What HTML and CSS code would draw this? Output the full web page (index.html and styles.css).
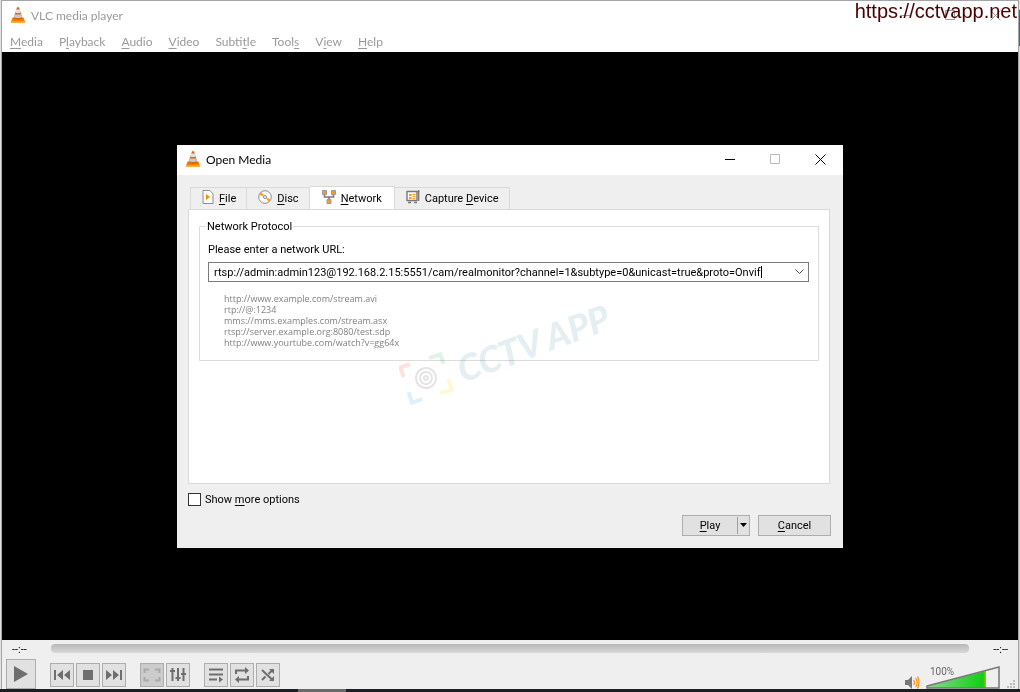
FILE: index.html
```html
<!DOCTYPE html>
<html lang="en">
<head>
  <meta charset="UTF-8" />
  <meta name="viewport" content="width=device-width, initial-scale=1.0" />
  <title>VLC media player</title>
  <link rel="stylesheet" href="styles.css">
</head>
<body>
  <svg class="defs" width="0" height="0" aria-hidden="true">
    <symbol id="cone" viewBox="0 0 16 18">
      <path d="M2.5 11.500h11l1.600 5H.9z" fill="#f57c00"/>
      <path d="M.9 15h14.200v1.600H.9z" fill="#ffa51f"/>
      <path d="M7 1.200h2l3.500 11.300c-1.400 1.600-7.600 1.600-9 0z" fill="#e0660a"/>
      <path d="M6.200 3.600h3.600l.9 2.900c-1 .8-4.400.8-5.400 0z" fill="#dfe2e4"/>
      <path d="M4.800 8.500h6.400l.9 2.800c-1.600 1-6.600 1-8.200 0z" fill="#c4c9cc"/>
    </symbol>
  </svg>

  <div class="window">
    <header>
      <div class="titlebar">
        <svg class="cone" width="16" height="18"><use href="#cone"/></svg>
        <span>VLC media player</span>
        <div class="win-buttons">
          <button aria-label="Minimize"><svg width="11" height="11"><path d="M0 5.500h10"/></svg></button>
          <button aria-label="Maximize"><svg width="11" height="11"><path d="M.5.5h9v9h-9z"/></svg></button>
          <button aria-label="Close"><svg width="11" height="11"><path d="M.5.5l10 10M10.500.5l-10 10"/></svg></button>
        </div>
      </div>
      <nav>
        <a href="#media"><u>M</u>edia</a>
        <a href="#playback">P<u>l</u>ayback</a>
        <a href="#audio"><u>A</u>udio</a>
        <a href="#video"><u>V</u>ideo</a>
        <a href="#subtitle">Subti<u>t</u>le</a>
        <a href="#tools">Tool<u>s</u></a>
        <a href="#view">V<u>i</u>ew</a>
        <a href="#help"><u>H</u>elp</a>
      </nav>
    </header>

    <main class="video">
      <section class="dialog" role="dialog" aria-label="Open Media">
        <div class="dialog-title">
          <svg class="cone" width="16" height="18"><use href="#cone"/></svg>
          <span>Open Media</span>
          <div class="win-buttons">
            <button aria-label="Minimize"><svg width="11" height="11"><path d="M0 5.500h10"/></svg></button>
            <button class="off" aria-label="Maximize" disabled><svg width="11" height="11"><path d="M.5.5h9v9h-9z"/></svg></button>
            <button aria-label="Close"><svg width="11" height="11"><path d="M.5.5l10 10M10.500.5l-10 10"/></svg></button>
          </div>
        </div>

        <div class="dialog-body">
          <div class="tabs" role="tablist">
            <button class="tab" role="tab">
              <svg width="12" height="15"><path d="M1 .5h7l3 3.500v9.500H1z" fill="#fff" stroke="#8c8c8c"/><path d="M4 4v6l4-3z" fill="#ff8c00"/></svg>
              <span><u>F</u>ile</span>
            </button>
            <button class="tab" role="tab">
              <svg width="14" height="15"><circle cx="7" cy="7" r="6.300" fill="#fff" stroke="#8c8c8c"/><path d="M6.500 6.500L1.500 5a6 6 0 0 1 2-3zM7.500 7.500l5 1.500a6 6 0 0 1-2 3z" fill="#ff9a1f"/><circle cx="7" cy="7" r="1.500" fill="#fff" stroke="#8c8c8c"/></svg>
              <span><u>D</u>isc</span>
            </button>
            <button class="tab active" role="tab" aria-selected="true">
              <svg width="14" height="14"><path d="M2.500 5v2h9V5M7 7v3" fill="none" stroke="#7a7a7a" stroke-width="1.600"/><path d="M.5.5h4v4h-4zM9.500.5h4v4h-4zM5 9.500h4v4H5z" fill="#ff9a1f" stroke="#999"/></svg>
              <span><u>N</u>etwork</span>
            </button>
            <button class="tab" role="tab">
              <svg width="14" height="14"><path d="M1 1.500h10v9H1z" fill="#fff" stroke="#777" stroke-width="1.400"/><path d="M11 1.700h2.500M12.700 0v11M2 12.500h3M8 12.500h3" stroke="#777" stroke-width="1.300"/><path d="M3 4h2.500v2H3zM3 7h2.500v2H3zM6.500 4h3v1h-3zM6.500 6h3v1h-3zM6.500 8h3v1h-3z" fill="#ff9a1f"/></svg>
              <span>Capture <u>D</u>evice</span>
            </button>
          </div>

          <div class="pane" role="tabpanel">
            <fieldset>
              <legend>Network Protocol</legend>
              <label for="url">Please enter a network URL:</label>
              <div class="combo">
                <input type="text" id="url" spellcheck="false" value="rtsp://admin:admin123@192.168.2.15:5551/cam/realmonitor?channel=1&amp;subtype=0&amp;unicast=true&amp;proto=Onvif">
                <i class="caret"></i>
                <button aria-label="Recent URLs"><svg width="9" height="6"><path d="M.5.500l4 4 4-4" fill="none" stroke="#444"/></svg></button>
              </div>
              <ul class="examples">
                <li>http://www.example.com/stream.avi</li>
                <li>rtp://@:1234</li>
                <li>mms://mms.examples.com/stream.asx</li>
                <li>rtsp://server.example.org:8080/test.sdp</li>
                <li>http://www.yourtube.com/watch?v=gg64x</li>
              </ul>
            </fieldset>

            <svg class="brand" width="230" height="130" viewBox="0 0 230 130">
              <g transform="rotate(-18 27 95)" fill="none" stroke-width="4">
                <path d="M6 87V77h10" stroke="#fde0e0"/>
                <path d="M36 77h12v10" stroke="#dff4e7"/>
                <path d="M6 103v11h11" stroke="#dcf1fd"/>
                <path d="M36 114h12v-11" stroke="#fdfad2"/>
                <g stroke="#e4e4e4" stroke-width="2">
                  <circle cx="27" cy="95" r="10"/>
                  <circle cx="27" cy="95" r="6"/>
                  <circle cx="27" cy="95" r="2"/>
                </g>
              </g>
              <text x="64" y="100" transform="rotate(-20 64 100)">CCTV APP</text>
            </svg>
          </div>

          <label class="more"><input type="checkbox"> <span>Show <u>m</u>ore options</span></label>

          <div class="actions">
            <div class="split">
              <button class="play"><u>P</u>lay</button>
              <button class="arrow" aria-label="More play options"><svg width="7" height="4"><path d="M0 0h7L3.500 4z"/></svg></button>
            </div>
            <button class="cancel"><u>C</u>ancel</button>
          </div>
        </div>
      </section>
    </main>

    <footer>
      <div class="seek">
        <span>--:--</span>
        <input type="range" min="0" max="100" value="0" aria-label="Position">
        <span>--:--</span>
      </div>
      <div class="controls">
        <button class="big" aria-label="Play"><svg width="14" height="16"><path d="M0 0v16l14-8z"/></svg></button>
        <div class="group">
          <button aria-label="Previous"><svg width="16" height="12"><path d="M0 1h2v10H0zM9 1v10L3 6zM16 1v10l-6-5z"/></svg></button>
          <button aria-label="Stop"><svg width="10" height="10"><path d="M0 0h10v10H0z"/></svg></button>
          <button aria-label="Next"><svg width="16" height="12"><path d="M14 1h2v10h-2zM7 1v10l6-5zM0 1v10l6-5z"/></svg></button>
        </div>
        <div class="group">
          <button class="off" aria-label="Fullscreen" disabled><svg width="18" height="14"><path d="M1.500 5V1.500H6M12 1.500h4.500V5M16.500 9v3.500H12M6 12.500H1.500V9" class="line"/></svg></button>
          <button aria-label="Extended settings"><svg width="18" height="16"><path d="M3.500 1v13M9 1v13M14.500 1v13" class="line"/><path d="M1 3h5v2H1zM6.500 10h5v2h-5zM12 6h5v2h-5z"/></svg></button>
        </div>
        <div class="group">
          <button aria-label="Playlist"><svg width="16" height="16"><path d="M1 2.500h14M1 7.500h14M1 12.500h8" class="line"/><path d="M11 9.500v6l4-3z"/></svg></button>
          <button aria-label="Loop"><svg width="16" height="16"><path d="M2 7V3.500h10M14 9v3.500H4" class="line"/><path d="M11 0v7l4-3.500zM5 9v7l-4-3.500z"/></svg></button>
          <button aria-label="Random"><svg width="16" height="14"><path d="M2 2l10 9.500M2 12l3.500-3.500M8.500 6L12 2.500" class="line"/><path d="M9 1h5v5zM9 13h5V8z"/></svg></button>
        </div>
        <div class="volume">
          <svg width="15" height="13"><path d="M0 4h3l4-4v13L3 9H0z" fill="#777"/><path d="M8.500 4q2 2.500 0 5M10.500 2q3.500 4.500 0 9M12.500.5q3 6 0 12" fill="none" stroke="#ff8c00" stroke-width="1.200"/></svg>
          <div class="level">
            <span>100%</span>
            <svg width="75" height="23">
              <defs><linearGradient id="lvl"><stop offset="0" stop-color="#8ad88a"/><stop offset=".95" stop-color="#12cf12"/><stop offset="1" stop-color="#b4b414"/></linearGradient></defs>
              <path d="M2 20L60 5v17H2z" fill="url(#lvl)"/>
              <path d="M1 20L73 1v21H1z" fill="none" stroke="#777" stroke-width="1.500"/>
            </svg>
            <input type="range" min="0" max="125" value="100" aria-label="Volume">
          </div>
          <svg class="grip" width="9" height="9"><path d="M6 0h2v2H6zM3 3h2v2H3zM6 3h2v2H6zM0 6h2v2H0zM3 6h2v2H3zM6 6h2v2H6z" fill="#bbb"/></svg>
        </div>
      </div>
    </footer>
  </div>
  <div class="taskbar"><i></i></div>
  <a class="site" href="https://cctvapp.net">https://cctvapp.net</a>
</body>
</html>
```
FILE: styles.css
```css
* { box-sizing: border-box; }
body { margin: 0; height: 100vh; display: flex; flex-direction: column; overflow: hidden; position: relative; background: linear-gradient(#e4e4e4 10px, #1573a5 10px, #1573a5 46px, #d6d6d6 46px) right / 2px 100% no-repeat #e2e2e2; font: 11px/14px Roboto, "Open Sans", sans-serif; color: #000; }
button, input { font: inherit; color: inherit; }
button { margin: 0; padding: 0; border: 0; background: none; display: flex; align-items: center; justify-content: center; }
u { text-underline-offset: 2px; }
.defs { position: absolute; }

.window { flex: 1; min-height: 0; margin: 0 1px; border: 1px solid #a5a5a5; border-bottom: 0; display: flex; flex-direction: column; background: #efefef; }
header { background: #fff; color: #999; font: 12px/16px Lato, "Open Sans", sans-serif; }
.titlebar, .dialog-title { display: flex; align-items: center; gap: 5px; height: 30px; padding-left: 8px; }
.cone { margin-bottom: 2px; }
.win-buttons { display: flex; align-self: stretch; margin-left: auto; }
.win-buttons button { width: 45px; padding: 0 1px 1px 0; }
.win-buttons svg { fill: none; stroke: currentColor; }
.win-buttons .off { color: #bbb; }
nav { display: flex; gap: 16px; height: 21px; padding: 3px 8px 0; }
nav a { color: inherit; text-decoration: none; }

.video { flex: 1; min-height: 0; display: flex; align-items: center; justify-content: center; background: #000; }
.dialog { width: 666px; max-width: 100%; background: #efefef; }
.dialog-title { background: #fff; font: 12px/16px Lato, "Open Sans", sans-serif; }
.dialog-body { padding: 11px 12px 12px 11px; }
.tabs { display: flex; align-items: flex-end; padding-left: 2px; }
.tab { height: 23px; gap: 5px; padding: 2px 10px 0 11px; border: 1px solid #d9d9d9; border-left-width: 0; }
.tab:first-child { border-left-width: 1px; }
.tab svg { margin-bottom: 4px; }
.tab.active { height: 25px; margin-bottom: -1px; padding: 0 12px; background: #fff; border-bottom: 0; position: relative; }

.pane { position: relative; min-height: 275px; margin: -1px 1px 0 0; padding: 10px; background: #fff; border: 1px solid #d9d9d9; }
fieldset { min-width: 0; margin: 0; padding: 9px 9px 12px 8px; border: 1px solid #dcdcdc; }
legend { margin-left: -2px; padding: 0 1px; }
.combo { display: flex; height: 20px; margin: 5px 0 11px; border: 1px solid #7a7a7a; background: #fff; }
.combo input { field-sizing: content; min-width: 0; padding: 2px 0 0 5px; border: 0; outline: 0; background: none; }
.caret { width: 1px; margin: 3px 0; background: #000; }
.combo button { width: 17px; margin-left: auto; }
.examples { margin: 0; padding: 0 0 0 16px; list-style: none; color: #808080; font: 9px/11px "Open Sans", sans-serif; }
.brand { position: absolute; left: 210px; top: 73px; pointer-events: none; mix-blend-mode: multiply; }
.brand text { font: italic 900 36px Lato, sans-serif; fill: #e5eff2; }

.more { display: flex; align-items: center; gap: 4px; width: max-content; margin-top: 9px; }
.more input { appearance: none; width: 13px; height: 13px; margin: 0; background: #fff; border: 1px solid #333; }
.more input:checked { background: #333; }
.actions { display: flex; justify-content: flex-end; gap: 8px; margin-top: 8px; }
.split { display: flex; height: 21px; background: #e1e1e1; border: 1px solid #adadad; }
.play { width: 54px; padding-top: 2px; }
.arrow { width: 12px; margin: 1px 0; border-left: 1px solid #a0a0a0; }
.cancel { width: 73px; height: 21px; padding-top: 2px; background: #e1e1e1; border: 1px solid #adadad; }

footer { height: 49px; overflow: hidden; }
.seek { display: flex; align-items: center; gap: 24px; height: 19px; padding: 0 10px; }
.seek input { appearance: none; flex: 1; height: 9px; margin: 0 0 2px; border-radius: 4px; background: linear-gradient(#b8b8b8, #d8d8d8); }
.seek input::-webkit-slider-thumb { appearance: none; width: 0; }
.controls { display: flex; align-items: flex-start; gap: 14px; padding: 0 2px 0 4px; }
.controls button { width: 24px; height: 24px; background: #e1e1e1; border: 1px solid #adadad; fill: #6e6e6e; }
.controls .big { width: 30px; height: 30px; }
.controls button.off { background: #ccc; fill: #aaa; color: #aaa; }
.line { fill: none; stroke: #6e6e6e; stroke-width: 2px; }
.off .line { stroke: #aaa; }
.group { display: flex; gap: 2px; padding-top: 4px; }
.volume { display: flex; align-items: flex-end; gap: 6px; margin-left: auto; height: 30px; }
.level { position: relative; display: flex; height: 23px; }
.level span { position: absolute; left: 4px; top: 0; color: #666; font-size: 10px; line-height: 12px; }
.level input { position: absolute; inset: 0; width: 100%; margin: 0; opacity: 0; }

.taskbar { display: flex; justify-content: center; height: 3px; background: #1b1e23; }
.taskbar i { width: 48px; margin-right: 376px; background: #6b6b6b; }
.site { position: absolute; top: 0; right: 3px; color: #4a0000; font: 20px/22px "Liberation Sans", Arial, sans-serif; text-decoration: none; }
```
